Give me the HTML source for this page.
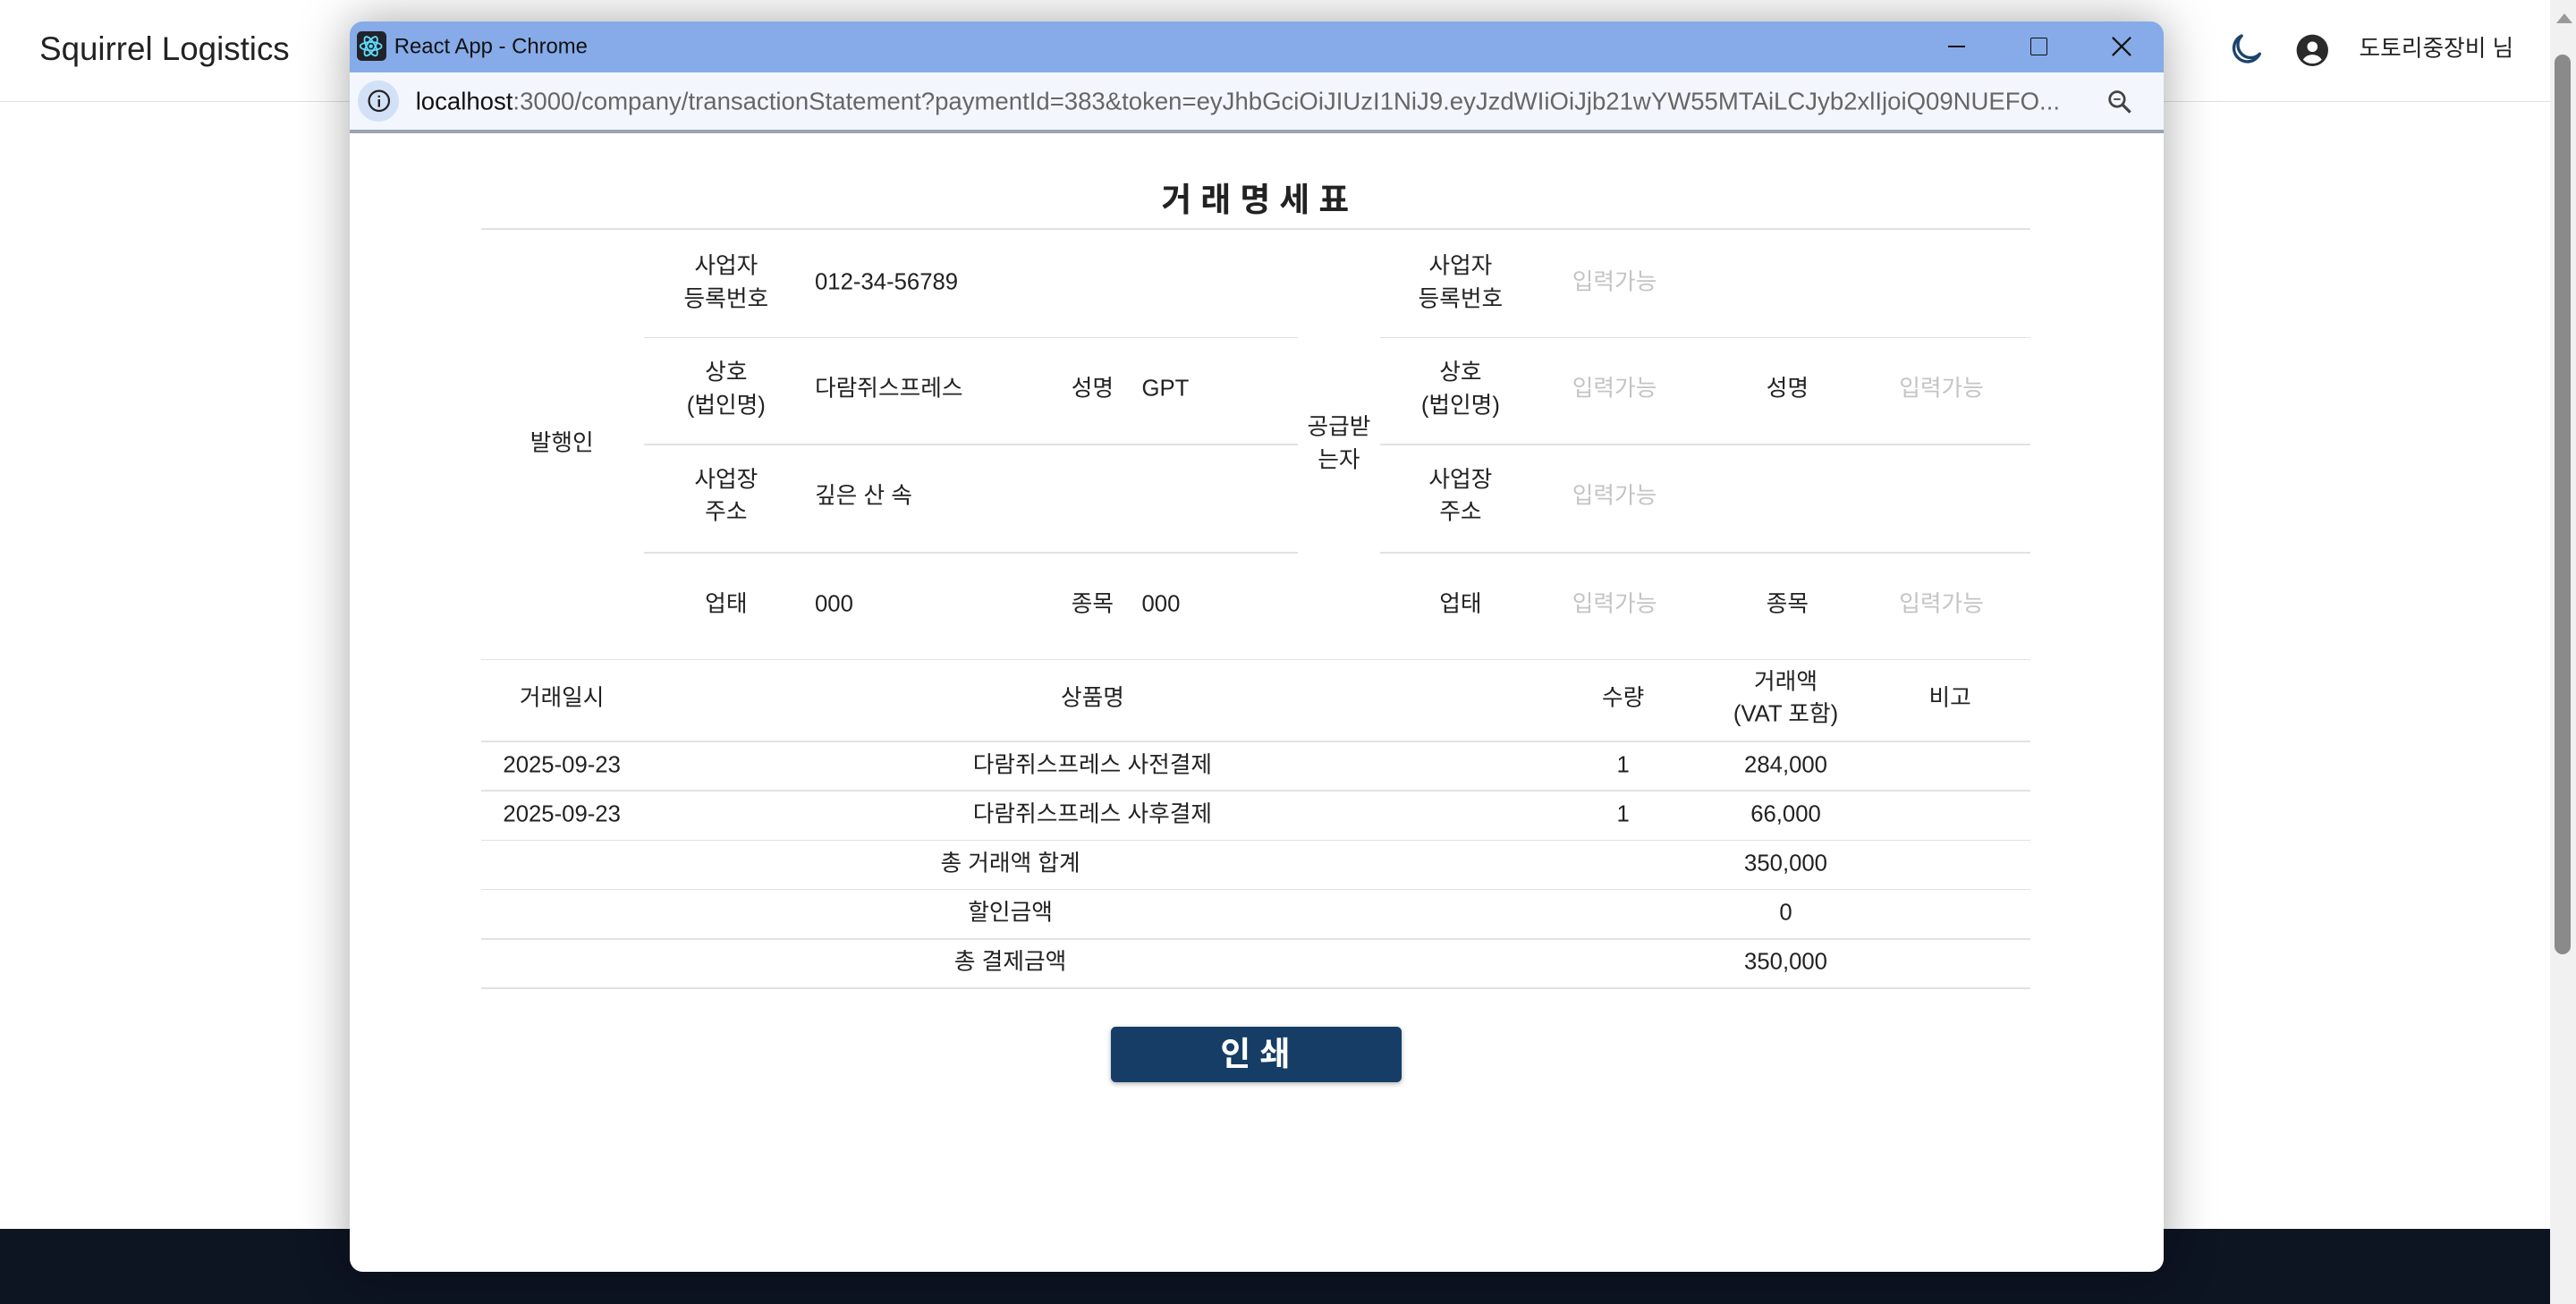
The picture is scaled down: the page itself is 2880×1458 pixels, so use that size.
<!DOCTYPE html>
<html><head><meta charset="utf-8"><style>
*{margin:0;padding:0;box-sizing:border-box}
html,body{width:2880px;height:1458px;overflow:hidden;background:#fff}
#r{zoom:1.83673;width:1568px;height:794px;position:relative;font-family:"Liberation Sans","Noto Sans CJK KR",sans-serif;color:#222}
.a{position:absolute}
.t{position:absolute;font-size:14px;line-height:20px;text-align:center;transform:translate(-50%,-50%);white-space:nowrap}
.l{position:absolute;font-size:14px;line-height:20px;transform:translateY(-50%);white-space:nowrap}
.g{color:#c4c4c4}
.h{position:absolute;height:1px;background:#e2e2e2}
</style></head><body><div id="r">
<div class="a" style="left:0;top:0;width:1552px;height:62px;border-bottom:1px solid #e0e0e0;background:#fff"></div>
<div class="l" style="left:24px;top:30px;font-size:20px;line-height:24px;color:#222">Squirrel Logistics</div>
<svg class="a" style="left:1356px;top:19px" width="22" height="22" viewBox="0 0 24 24"><path d="M9 3a9 9 0 1 0 12 12A8 8 0 0 1 9 3z" fill="none" stroke="#1b446d" stroke-width="2" stroke-linejoin="round"/></svg>
<svg class="a" style="left:1397px;top:20px" width="21" height="21" viewBox="0 0 24 24"><circle cx="12" cy="12" r="11" fill="#2a2a2a"/><circle cx="12" cy="9.5" r="3.6" fill="#fff"/><path d="M5.5 18.5c1.5-2.5 4-3.5 6.5-3.5s5 1 6.5 3.5a9 9 0 0 1-13 0z" fill="#fff"/></svg>
<div class="l" style="left:1436px;top:30px;font-size:14px">도토리중장비 님</div>
<div class="a" style="left:1552px;top:0;width:16px;height:794px;background:#f1f1f1"></div>
<div class="a" style="left:1555px;top:33px;width:10px;height:548px;background:#8a8a8a;border-radius:5px"></div>
<div class="a" style="left:1556px;top:8px;width:0;height:0;border-left:5px solid transparent;border-right:5px solid transparent;border-bottom:6px solid #9a9a9a"></div>
<div class="a" style="left:0;top:748px;width:1552px;height:46px;background:#0d1422"></div>
<div class="a" style="left:213px;top:13px;width:1104px;height:761px;background:#fff;border-radius:8px;box-shadow:0 0 30px rgba(0,0,0,.35);overflow:hidden">
 <div class="a" style="left:0;top:0;width:1104px;height:31px;background:#86abe8"></div>
 <div class="a" style="left:4px;top:6px;width:18px;height:18px;background:#20232a;border-radius:3px"></div>
 <svg class="a" style="left:5px;top:7px" width="16" height="16" viewBox="0 0 16 16"><g fill="none" stroke="#61dafb" stroke-width="1"><ellipse cx="8" cy="8" rx="6.5" ry="2.5"/><ellipse cx="8" cy="8" rx="6.5" ry="2.5" transform="rotate(60 8 8)"/><ellipse cx="8" cy="8" rx="6.5" ry="2.5" transform="rotate(120 8 8)"/></g><circle cx="8" cy="8" r="1.2" fill="#61dafb"/></svg>
 <div class="l" style="left:27px;top:16px;font-size:13px;color:#111">React App - Chrome</div>
 <div class="a" style="left:973px;top:15px;width:10px;height:1px;background:#111"></div>
 <div class="a" style="left:1023px;top:10px;width:10px;height:11px;border:1px solid #111;border-radius:1px"></div>
 <svg class="a" style="left:1072px;top:9px" width="13" height="13" viewBox="0 0 13 13"><path d="M1 1L12 12M12 1L1 12" stroke="#111" stroke-width="1.2"/></svg>
 <div class="a" style="left:0;top:31px;width:1104px;height:35px;background:#f3f7fd"></div>
 <div class="a" style="left:5px;top:36px;width:25px;height:25px;background:#d3e1f8;border-radius:50%"></div>
 <svg class="a" style="left:10px;top:41px" width="15" height="15" viewBox="0 0 16 16"><circle cx="8" cy="8" r="6.5" fill="none" stroke="#222" stroke-width="1.3"/><path d="M8 7v5M8 4.5v1.2" stroke="#222" stroke-width="1.4"/></svg>
 <div class="l" style="left:40px;top:49px;font-size:15px;color:#666"><span style="color:#111">localhost</span>:3000/company/transactionStatement?paymentId=383&amp;token=eyJhbGciOiJIUzI1NiJ9.eyJzdWIiOiJjb21wYW55MTAiLCJyb2xlIjoiQ09NUEFO...</div>
 <svg class="a" style="left:1069px;top:41px" width="16" height="16" viewBox="0 0 16 16"><circle cx="6.5" cy="6.5" r="4.5" fill="none" stroke="#444" stroke-width="1.5"/><path d="M10 10l4.5 4.5" stroke="#444" stroke-width="1.8"/><path d="M4.5 6.5h4" stroke="#444"/></svg>
 <div class="a" style="left:0;top:66px;width:1104px;height:2px;background:#9aa3b5"></div>
</div>
<div class="t" style="left:764px;top:122px;font-size:20px;font-weight:bold;line-height:24px">거 래 명 세 표</div>
<div class="h" style="left:293px;top:139px;width:943px"></div>
<div class="h" style="left:392px;top:205px;width:398px"></div><div class="h" style="left:392px;top:270px;width:398px"></div><div class="h" style="left:392px;top:336px;width:398px"></div>
<div class="h" style="left:840px;top:205px;width:396px"></div><div class="h" style="left:840px;top:270px;width:396px"></div><div class="h" style="left:840px;top:336px;width:396px"></div>
<div class="h" style="left:293px;top:401px;width:943px"></div>
<div class="t" style="left:342px;top:270px">발행인</div>
<div class="t" style="left:815px;top:270px">공급받<br>는자</div>
<div class="t" style="left:442px;top:172px">사업자<br>등록번호</div>
<div class="t" style="left:442px;top:237px">상호<br>(법인명)</div>
<div class="t" style="left:442px;top:302px">사업장<br>주소</div>
<div class="t" style="left:442px;top:368px">업태</div>
<div class="l" style="left:496px;top:172px">012-34-56789</div>
<div class="l" style="left:496px;top:237px">다람쥐스프레스</div>
<div class="l" style="left:496px;top:302px">깊은 산 속</div>
<div class="l" style="left:496px;top:368px">000</div>
<div class="t" style="left:665px;top:237px">성명</div><div class="l" style="left:695px;top:237px">GPT</div>
<div class="t" style="left:665px;top:368px">종목</div><div class="l" style="left:695px;top:368px">000</div>
<div class="t" style="left:889px;top:172px">사업자<br>등록번호</div>
<div class="t" style="left:889px;top:237px">상호<br>(법인명)</div>
<div class="t" style="left:889px;top:302px">사업장<br>주소</div>
<div class="t" style="left:889px;top:368px">업태</div>
<div class="l g" style="left:957px;top:172px">입력가능</div>
<div class="l g" style="left:957px;top:237px">입력가능</div>
<div class="l g" style="left:957px;top:302px">입력가능</div>
<div class="l g" style="left:957px;top:368px">입력가능</div>
<div class="t" style="left:1088px;top:237px">성명</div><div class="l g" style="left:1156px;top:237px">입력가능</div>
<div class="t" style="left:1088px;top:368px">종목</div><div class="l g" style="left:1156px;top:368px">입력가능</div>
<div class="t" style="left:342px;top:425px">거래일시</div>
<div class="t" style="left:665px;top:425px">상품명</div>
<div class="t" style="left:988px;top:425px">수량</div>
<div class="t" style="left:1087px;top:425px">거래액<br>(VAT 포함)</div>
<div class="t" style="left:1187px;top:425px">비고</div>
<div class="h" style="left:293px;top:451px;width:943px"></div>
<div class="h" style="left:293px;top:481px;width:943px"></div>
<div class="h" style="left:293px;top:511px;width:943px"></div>
<div class="h" style="left:293px;top:541px;width:943px"></div>
<div class="h" style="left:293px;top:571px;width:943px"></div>
<div class="h" style="left:293px;top:601px;width:943px"></div>
<div class="t" style="left:342px;top:466px">2025-09-23</div><div class="t" style="left:665px;top:466px">다람쥐스프레스 사전결제</div><div class="t" style="left:988px;top:466px">1</div><div class="t" style="left:1087px;top:466px">284,000</div>
<div class="t" style="left:342px;top:496px">2025-09-23</div><div class="t" style="left:665px;top:496px">다람쥐스프레스 사후결제</div><div class="t" style="left:988px;top:496px">1</div><div class="t" style="left:1087px;top:496px">66,000</div>
<div class="t" style="left:615px;top:526px">총 거래액 합계</div><div class="t" style="left:1087px;top:526px">350,000</div>
<div class="t" style="left:615px;top:556px">할인금액</div><div class="t" style="left:1087px;top:556px">0</div>
<div class="t" style="left:615px;top:586px">총 결제금액</div><div class="t" style="left:1087px;top:586px">350,000</div>
<div class="a" style="left:676px;top:625px;width:177px;height:34px;background:#153d66;border-radius:3px;box-shadow:0 1px 3px rgba(0,0,0,.3)"></div>
<div class="t" style="left:764px;top:642px;color:#fff;font-size:20px;font-weight:bold;line-height:24px">인 쇄</div>
</div></body></html>
